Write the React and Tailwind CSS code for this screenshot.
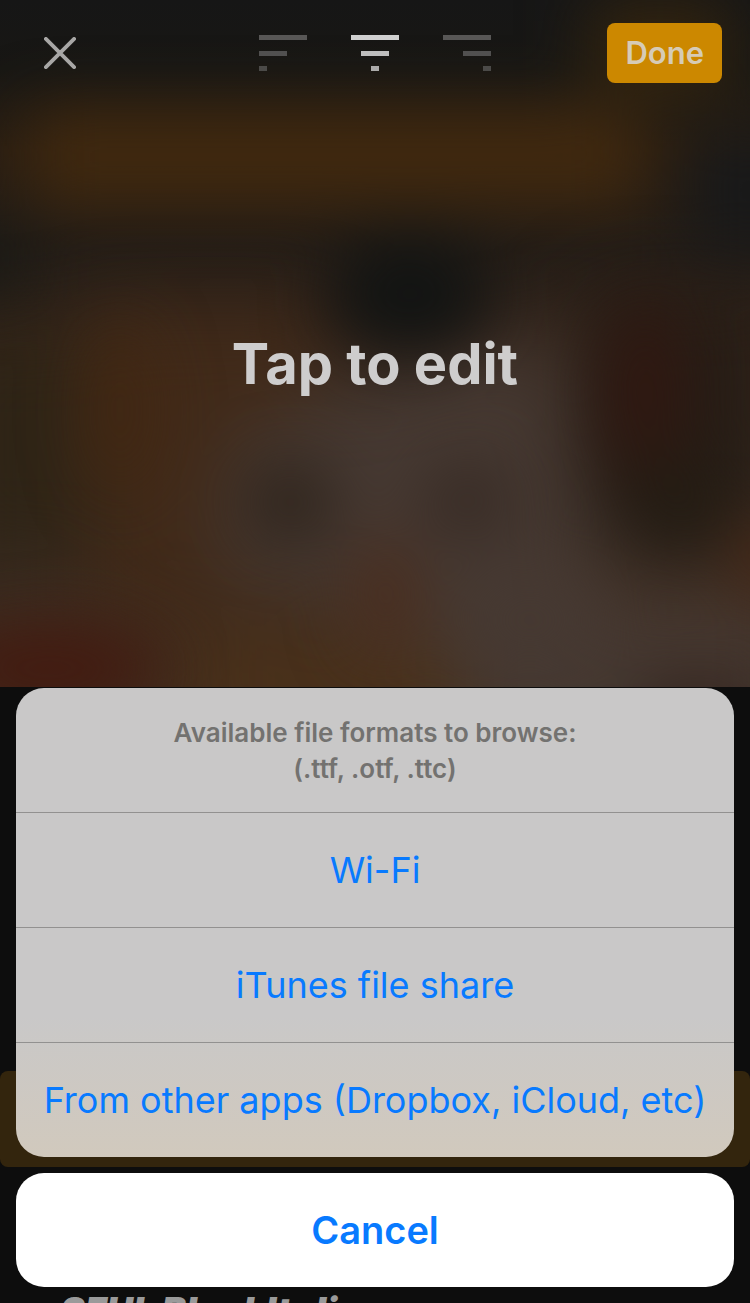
import { useState } from "react";

const alignments = [
  { id: "left", label: "Align left", x: [0, 0, 0] },
  { id: "center", label: "Align center", x: [0, 10, 20] },
  { id: "right", label: "Align right", x: [0, 20, 40] },
];

const fonts = [
  { id: 1 },
  { id: 2 },
  { id: 3 },
  { id: 4 },
  { id: 5, selected: true },
  { id: 6 },
  { id: 7, name: "SFUI-BlackItalic" },
];

const sources = [
  "Wi-Fi",
  "iTunes file share",
  "From other apps (Dropbox, iCloud, etc)",
];

function AlignIcon({ x }) {
  return (
    <svg width="48" height="36" viewBox="0 0 48 36" fill="currentColor">
      <rect x={x[0]} y="0" width="48" height="5" />
      <rect x={x[1]} y="16" width="28" height="5" opacity="0.9" />
      <rect x={x[2]} y="31" width="8" height="5" opacity="0.8" />
    </svg>
  );
}

// Out of focus photo behind the editor
function Backdrop() {
  return (
    <svg
      className="absolute inset-0 h-full w-full"
      viewBox="0 0 750 687"
      preserveAspectRatio="none"
      aria-hidden="true"
    >
      <defs>
        <filter id="soft" x="-50%" y="-50%" width="200%" height="200%" colorInterpolationFilters="sRGB">
          <feGaussianBlur stdDeviation="32" />
        </filter>
        <filter id="softer" x="-50%" y="-50%" width="200%" height="200%" colorInterpolationFilters="sRGB">
          <feGaussianBlur stdDeviation="40" />
        </filter>
        <linearGradient id="base" x1="0" y1="0" x2="0" y2="1">
          <stop offset="0" stopColor="#161616" />
          <stop offset="0.1" stopColor="#181714" />
          <stop offset="0.22" stopColor="#2a1e12" />
          <stop offset="0.36" stopColor="#241d17" />
          <stop offset="0.5" stopColor="#33241a" />
          <stop offset="0.75" stopColor="#3a2c23" />
          <stop offset="1" stopColor="#3f2c1e" />
        </linearGradient>
      </defs>
      <rect width="750" height="687" fill="url(#base)" />
      <g filter="url(#softer)">
        <rect x="-60" y="330" width="150" height="230" fill="#2e2416" />
        <rect x="90" y="310" width="240" height="320" fill="#412a19" />
        <path d="M230 450 L300 400 L560 330 L600 600 L800 600 L800 760 L460 760 L350 600 L220 580Z" fill="#463932" />
        <rect x="590" y="290" width="180" height="240" fill="#261d16" />
        <rect x="180" y="640" width="280" height="110" fill="#4a311a" />
      </g>
      <g filter="url(#soft)">
        <rect x="30" y="112" width="610" height="90" fill="#41290f" />
        <rect x="590" y="0" width="140" height="100" fill="#33240f" />
        <rect x="690" y="130" width="120" height="120" fill="#18191a" />
        <rect x="-60" y="230" width="90" height="60" fill="#181915" />
        <ellipse cx="410" cy="294" rx="82" ry="60" fill="#121413" />
        <ellipse cx="120" cy="410" rx="34" ry="90" fill="#43260f" opacity="0.7" />
        <ellipse cx="645" cy="390" rx="42" ry="90" fill="#301811" />
        <ellipse cx="680" cy="500" rx="48" ry="46" fill="#231c13" />
        <ellipse cx="290" cy="502" rx="46" ry="40" fill="#2d231b" />
        <ellipse cx="468" cy="500" rx="46" ry="36" fill="#362a24" />
        <ellipse cx="385" cy="595" rx="32" ry="60" fill="#4a2d1e" />
        <ellipse cx="530" cy="620" rx="70" ry="50" fill="#463932" />
        <ellipse cx="50" cy="668" rx="110" ry="42" fill="#431a10" />
        <ellipse cx="765" cy="560" rx="28" ry="38" fill="#4a2814" />
        <ellipse cx="700" cy="704" rx="70" ry="26" fill="#32231c" />
      </g>
    </svg>
  );
}

export default function App() {
  const [align, setAlign] = useState("center");
  const [sheetOpen, setSheetOpen] = useState(true);

  return (
    <div className="relative flex h-screen flex-col overflow-hidden bg-[#0d0d0d] font-['Inter','Liberation_Sans',sans-serif]">
      <main className="relative flex flex-1 flex-col overflow-hidden">
        <Backdrop />

        <header className="relative flex items-start justify-between px-7 pt-[23px]">
          <div className="flex flex-1">
            <button
              aria-label="Close"
              className="flex h-[60px] w-16 items-center justify-center text-[#a8a7a6]"
            >
              <svg width="32" height="32" viewBox="0 0 32 32" stroke="currentColor" strokeWidth="3.8" strokeLinecap="round">
                <path d="M1.9 1.9 30.1 30.1M30.1 1.9 1.9 30.1" />
              </svg>
            </button>
          </div>

          <div className="flex gap-11 pt-3">
            {alignments.map((item) => (
              <button
                key={item.id}
                aria-label={item.label}
                onClick={() => setAlign(item.id)}
                className={align === item.id ? "text-[#d0d0d0]" : "text-[#585756]"}
              >
                <AlignIcon x={item.x} />
              </button>
            ))}
          </div>

          <div className="flex flex-1 justify-end">
            <button className="h-[60px] rounded-lg bg-[#cc8800] px-[18px] text-[31px] font-semibold text-[#d6cbb6]">
              Done
            </button>
          </div>
        </header>

        <button className="absolute inset-x-0 top-[324px] text-center text-[56px] leading-20 font-bold text-[#cecdcd]">
          Tap to edit
        </button>
      </main>

      <ul className="h-[616px] shrink-0 overflow-hidden">
        {fonts.map((font) => (
          <li
            key={font.id}
            className={`flex h-24 items-center rounded-lg px-[60px] text-[37px] font-black text-[#9a9a9a] italic ${
              font.selected ? "bg-[#33250d]" : ""
            }`}
          >
            {font.name}
          </li>
        ))}
      </ul>

      {sheetOpen && (
        <div
          role="dialog"
          aria-label="Browse fonts"
          className="absolute inset-x-4 bottom-4 flex flex-col gap-4 text-[#087aff]"
        >
          <div className="divide-y divide-[#929190] overflow-hidden rounded-[28px] bg-linear-to-b from-[#c9c8c8] from-70% to-[#d1c9bd]">
            <p className="px-6 pt-[27px] pb-[25px] text-center text-[26px] leading-9 font-semibold text-[#737270]">
              Available file formats to browse:
              <br />
              (.ttf, .otf, .ttc)
            </p>
            {sources.map((source) => (
              <button
                key={source}
                className="block h-[115px] w-full text-center text-[36px] whitespace-nowrap last:h-[114px]"
              >
                {source}
              </button>
            ))}
          </div>

          <button
            onClick={() => setSheetOpen(false)}
            className="h-[114px] rounded-[28px] bg-white text-[38px] font-semibold"
          >
            Cancel
          </button>
        </div>
      )}
    </div>
  );
}
